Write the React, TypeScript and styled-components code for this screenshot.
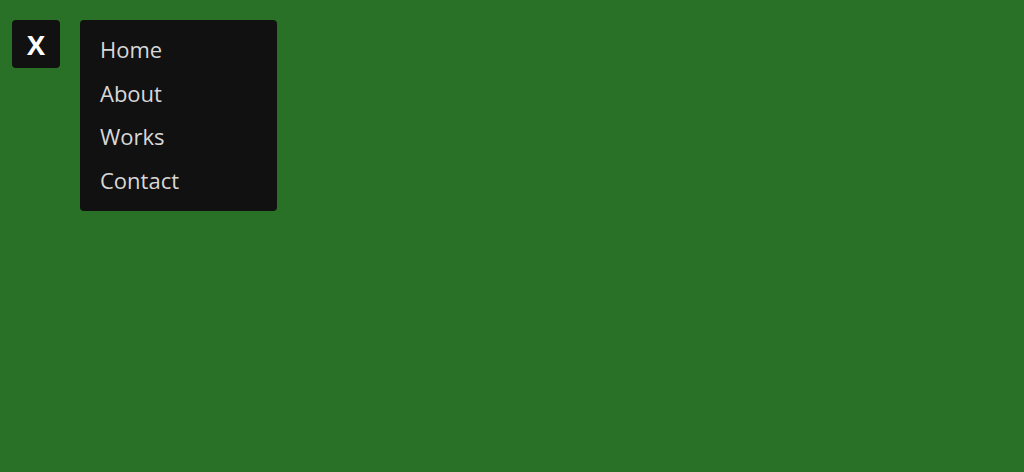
import styled, { createGlobalStyle } from "styled-components";

const GlobalStyle = createGlobalStyle`
    html, body {
        margin: 0;
        padding: 0;
        background: #2a7128;
        font-family: "Open Sans", "Noto Sans", sans-serif;
    }
`

const links = ["Home", "About", "Works", "Contact"];

const App = () => {
    return (
        <>
            <GlobalStyle />
            <Wrapper>
                <CloseButton>X</CloseButton>
                <Menu>
                    {links.map((link) => (
                        <MenuItem key={link}>{link}</MenuItem>
                    ))}
                </Menu>
            </Wrapper>
        </>
    )
}

const Wrapper = styled.div`
    display: flex;
    align-items: flex-start;
    gap: 20px;
    padding: 20px 12px;
    height: 472px;
    box-sizing: border-box;
`

const CloseButton = styled.button`
    width: 48px;
    height: 48px;
    border: none;
    border-radius: 4px;
    background: #111111;
    color: #ffffff;
    font-family: "Open Sans", sans-serif;
    font-size: 27px;
    font-weight: bold;
    padding: 0;
    display: flex;
    align-items: center;
    justify-content: center;
`

const Menu = styled.ul`
    list-style: none;
    margin: 0;
    width: 197px;
    box-sizing: border-box;
    padding: 8px 20px 9px;
    background: #111111;
    border-radius: 4px;
`

const MenuItem = styled.li`
    color: #d8d8d8;
    font-size: 22px;
    line-height: 43.5px;
    cursor: pointer;
`

export default App;
